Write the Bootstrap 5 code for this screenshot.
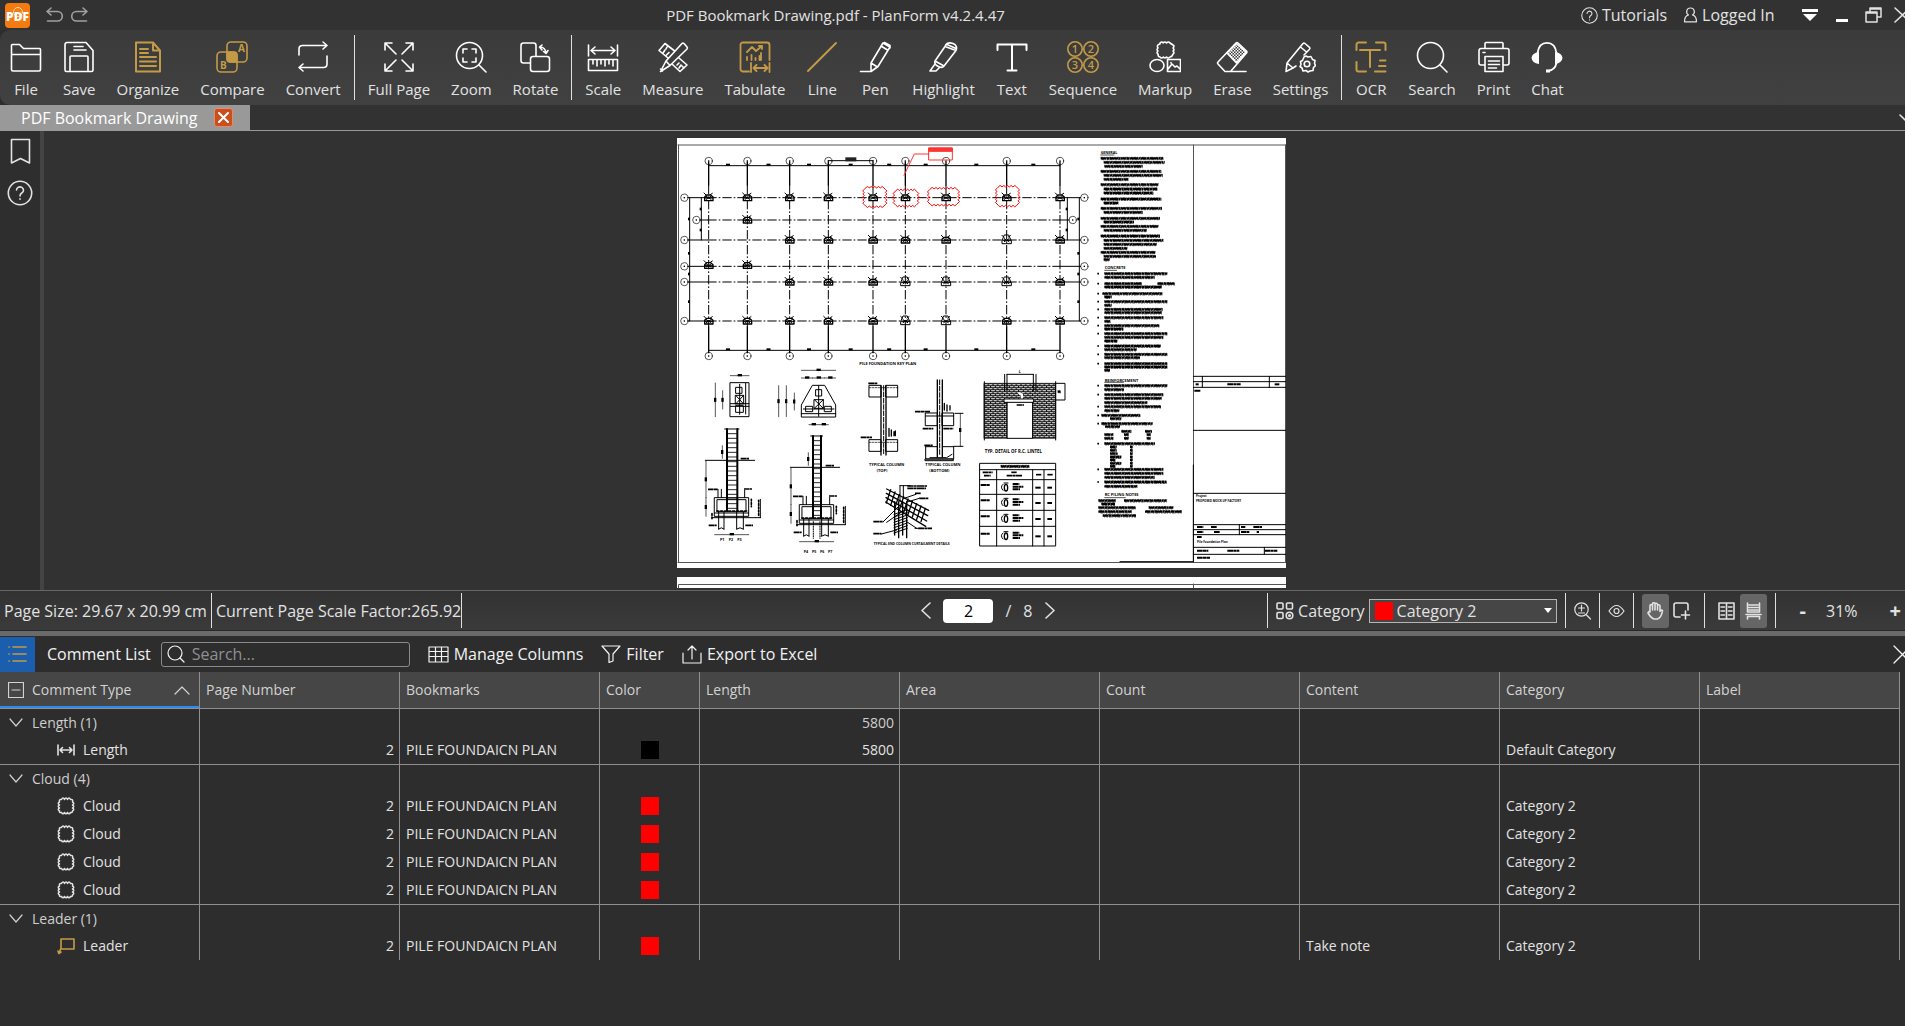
<!DOCTYPE html>
<html lang="en">
<head>
<meta charset="utf-8">
<meta name="viewport" content="width=device-width, initial-scale=1">
<title>PDF Bookmark Drawing.pdf - PlanForm</title>
<link rel="stylesheet" href="https://cdn.jsdelivr.net/npm/bootstrap@5.3.0/dist/css/bootstrap.min.css">
<style>
:root{--gold:#c39b46;--line:#8f8f8f}
body{font-family:"Open Sans","Noto Sans",sans-serif;font-size:15px;line-height:20px;background:#2d2d2d;color:#e2e2e2;height:100vh;overflow:hidden}
svg{display:block;flex:none;fill:none;stroke:currentColor;stroke-width:1.6;stroke-linecap:round;stroke-linejoin:round}
svg text{stroke:none;fill:currentColor;font-family:"Open Sans",sans-serif}
button,.plain{background:none;border:0;padding:0;color:inherit;text-decoration:none}
.gold{color:var(--gold)}
.titlebar{height:30px;background:#323232}
.titlebar .start{width:90px;padding-left:5px}
.titlebar .end{width:324px;overflow:hidden;font-size:16px}
.ribbon{height:75px;background:linear-gradient(#3b3b3b,#414141);border-radius:10px 0 0 10px;padding-left:10px}
.tools{gap:21px}
.tools button{min-width:30px;height:62px;padding-top:4px}
.tools svg{width:32px;height:32px;color:#fff}
.tools button.gold{color:inherit}
.tools .gold svg{color:var(--gold)}
.rule{width:1px;background:#e0e0e0;flex:none}
.ribbon .rule{height:65px;margin:0 13px}
.tabs{height:26px;background:#323232;border-bottom:1px solid #999}
.doctab{width:250px;background:#999;color:#fff;font-size:16px;padding-left:21px;gap:17px}
.closer{width:19px;height:19px;background:#c9501c;border:1px solid #e58a6c;border-radius:3px;color:#fff}
.work{background:#323232}
.rail{width:44px;background:#2e2e2e;border-right:4px solid #444;padding-top:6px;gap:15px}
.viewer{padding:7px 0 0 14px;overflow:hidden}
.sheet{width:609px;height:450px;color:#000;stroke-width:1;background:#323232}
.status{height:41px;font-size:16px;background:linear-gradient(#323232,#3b3b3b);border-top:1px solid #666;border-bottom:1px solid #282828;display:grid;grid-template-columns:1fr auto 1fr}
.status .rule{height:35px}
.pager{padding-left:71px;gap:12px}
.pager input{width:50px;height:24px;border:0;border-radius:4px;text-align:center;background:#fff;color:#000}
.catbox{width:188px;height:24px;border:1px solid #b5b5b5;background:#464646;padding-left:5px}
.catbox select{appearance:none;background:none;border:0;color:inherit;padding:0}
.chip{width:18px;height:18px;flex:none}
.red{background:#f00}.black{background:#000}
.toggle{width:27px;height:34px;border-radius:3px}
.toggle.on{background:#666}
.splitter{height:5px;background:#6a6a6a}
.listbar{height:36px;color:#f2f2f2;font-size:16px}
.listbtn{width:35px;height:35px;background:#1b5eae;color:var(--gold)}
.finder{width:249px;height:25px;border:1px solid #8a8a8a;border-radius:3px;padding-left:5px;gap:7px;margin-left:10px}
.finder input{background:none;border:0;color:inherit;outline:0;width:200px;padding:0}
.finder input::placeholder{color:#909090}
.listbar .act{gap:5px;margin-left:18px}
.grid{table-layout:fixed;width:1900px;border-collapse:separate;border-spacing:0;font-size:14px}
.grid th,.grid td{border-right:1px solid var(--line);padding:0 5px 0 6px;height:28px;white-space:nowrap}
.grid th{height:37px;background:#464646;border-bottom:1px solid var(--line);font-weight:400;color:#d2d2d2}
.grid th.sorted{box-shadow:inset 0 -2px #2a8cf0}
.grid th:first-child,.grid td:first-child{padding-left:8px}
.grid .group td{height:27px;color:#cfcfcf}
.grid tbody+tbody .group td{border-top:1px solid var(--line);height:28px}
.grid .leafcell{padding-left:49px}
.gridwrap{height:354px}
</style>
<script src="https://cdn.jsdelivr.net/npm/bootstrap@5.3.0/dist/js/bootstrap.bundle.min.js"></script>
</head>
<body class="d-flex flex-column">
<header class="titlebar d-flex align-items-center justify-content-between">
  <div class="start d-flex align-items-center">
    <svg width="25" height="25" viewBox="0 0 25 25"><rect width="25" height="25" rx="4" fill="#f47a12" stroke="none"/><circle cx="13" cy="9" r="4.5" stroke="#ffd9b0" stroke-width="1"/><text x="12.5" y="18" font-size="12" font-weight="800" text-anchor="middle" style="fill:#fff">PDF</text></svg>
    <button class="ms-3" aria-label="Undo"><svg width="17" height="16" viewBox="0 0 17 16" style="color:#a0a0a0"><path d="M5 1 1 4.500 5 8M1 4.500h10.500a4.700 4.700 0 0 1 0 9.500H1.500"/></svg></button>
    <button class="ms-2" aria-label="Redo"><svg width="17" height="16" viewBox="0 0 17 16" style="color:#a0a0a0"><path d="M12 1l4 3.500L12 8M16 4.500H5.500a4.700 4.700 0 0 0 0 9.500h10"/></svg></button>
  </div>
  <div>PDF Bookmark Drawing.pdf - PlanForm v4.2.4.47</div>
  <div class="end d-flex align-items-center">
    <a href="#" class="plain d-flex align-items-center flex-shrink-0"><svg class="me-1" width="17" height="17" viewBox="0 0 16 16"><circle cx="8" cy="8" r="7.300" stroke-width="1"/><path stroke-width="1" d="M5.700 6a2.300 2.200 0 1 1 3.500 2C8.300 8.500 8 8.800 8 10M8 12v.3"/></svg>Tutorials</a>
    <a href="#" class="plain d-flex align-items-center flex-shrink-0 ms-3"><svg class="me-1" width="15" height="16" viewBox="0 0 14 16"><path stroke-width="1.200" d="M7 1a3.700 3.700 0 0 1 2 6.900c2.500.7 4 3 4 6.900H1c0-3.900 1.500-6.200 4-6.900A3.700 3.700 0 0 1 7 1z"/></svg>Logged In</a>
    <button class="ms-4" aria-label="Ribbon options"><svg width="20" height="13" viewBox="0 0 20 13"><path d="M3 0h16v3H3zM4 5h14l-7 7z" fill="#fff" stroke="none"/></svg></button>
    <button class="ms-3" aria-label="Minimize"><svg width="14" height="16" viewBox="0 0 14 16"><path d="M1 12h12v3H1z" fill="#fff" stroke="none"/></svg></button>
    <button class="ms-3" aria-label="Restore"><svg width="18" height="16" viewBox="0 0 18 16"><path d="M1 5h11v10H1zM5 5V1h11v9h-4M1 6h11M5 2h11" stroke-width="1.500"/></svg></button>
    <button class="ms-2" aria-label="Close"><svg width="20" height="16" viewBox="0 0 20 16"><path d="M4 1l15 14M19 1 4 15"/></svg></button>
  </div>
</header>

<nav class="ribbon d-flex align-items-center" aria-label="Tools">
  <div class="tools d-flex">
    <button class="d-flex flex-column align-items-center justify-content-between"><svg viewBox="0 0 32 32"><path d="M1.500 28.500v-24a1 1 0 0 1 1-1h7l4 4h16a1 1 0 0 1 1 1v20a1.500 1.500 0 0 1-1.500 1.500H3a1.500 1.500 0 0 1-1.500-1.500zM2 13.500h28"/></svg>File</button>
    <button class="d-flex flex-column align-items-center justify-content-between"><svg viewBox="0 0 32 32"><path d="M4 1.500h19l7 8V29a1.500 1.500 0 0 1-1.500 1.500h-25A1.500 1.500 0 0 1 2 29V3.500a2 2 0 0 1 2-2zM7 30V16a1 1 0 0 1 1-1h16a1 1 0 0 1 1 1v14M11 5.500h9M11 9h12"/></svg>Save</button>
    <button class="gold d-flex flex-column align-items-center justify-content-between"><svg viewBox="0 0 32 32"><path d="M4 1.500h17l7 8v21H4zM21 1.500v8h7M8 8h8M8 12h8M8 16h16M8 20.500h16M8 25h16" stroke-width="2"/></svg>Organize</button>
    <button class="gold d-flex flex-column align-items-center justify-content-between"><svg viewBox="0 0 32 32"><rect x="11" y="1" width="20" height="20" rx="4"/><rect x="1" y="11" width="20" height="20" rx="4"/><rect x="11" y="11" width="10" height="10" rx="3" fill="currentColor"/><text x="22" y="11" font-size="10" font-weight="700">A</text><text x="4" y="28" font-size="10" font-weight="700">B</text></svg>Compare</button>
    <button class="d-flex flex-column align-items-center justify-content-between"><svg viewBox="0 0 32 32"><path d="M2 14V8q0-3.500 3.500-3.500H30M26 1l4 3.500L26 8M30 15v8q0 3.500-3.500 3.500H2M6 23l-4 3.500L6 30"/></svg>Convert</button>
  </div>
  <div class="rule"></div>
  <div class="tools d-flex">
    <button class="d-flex flex-column align-items-center justify-content-between"><svg viewBox="0 0 32 32"><path d="M2 9V2h7M2 2l11 11M23 2h7v7M30 2 19 13M2 23v7h7M2 30l11-11M30 23v7h-7M30 30 19 19"/></svg>Full Page</button>
    <button class="d-flex flex-column align-items-center justify-content-between"><svg viewBox="0 0 32 32"><circle cx="14.500" cy="14.500" r="13"/><path d="M24 24l7 7M8 12V8h4M17 8h4v4M21 17v4h-4M12 21H8v-4"/></svg>Zoom</button>
    <button class="d-flex flex-column align-items-center justify-content-between"><svg viewBox="0 0 32 32"><path d="M11 22H4.500A2.500 2.500 0 0 1 2 19.500v-15A2.500 2.500 0 0 1 4.500 2h10A2.500 2.500 0 0 1 17 4.500V15"/><rect x="11.500" y="15.500" width="19" height="15" rx="2.500"/><path d="M21 6q5 0 6 6M23 4l-2.500 2L23 9M24.500 10.500l2.500 2 2-3"/></svg>Rotate</button>
  </div>
  <div class="rule"></div>
  <div class="tools d-flex">
    <button class="d-flex flex-column align-items-center justify-content-between"><svg viewBox="0 0 32 32"><path d="M1.500 4v11M30.500 4v11M4 9.500h24M8 6 4 9.500 8 13M24 6l4 3.500-4 3.500M1.500 18.500h29v11h-29zM6 19v4M10 19v6M14 19v4M18 19v6M22 19v4M26 19v6"/></svg>Scale</button>
    <button class="d-flex flex-column align-items-center justify-content-between"><svg viewBox="0 0 32 32"><path d="M9 20 25 2.500a1.500 1.500 0 0 1 2 0L30 6a1.500 1.500 0 0 1 0 2L13 24.500 3.500 30.500zM9 20l4 4.500M3.500 28l2 2M11 17l-9-7.500L8 2.500l9 7M6 12l2-3M9 14.500l3-3M10 6l-1 2M22 17l8 7-7 6.500-7.500-7M22 27l2-3M20 24l2-2M27 27l-2-2"/></svg>Measure</button>
    <button class="gold d-flex flex-column align-items-center justify-content-between"><svg viewBox="0 0 32 32"><path d="M10 30.500H4A2.500 2.500 0 0 1 1.500 28V4A2.500 2.500 0 0 1 4 1.500h24A2.500 2.500 0 0 1 30.500 4v15M8 11l5-5 4 4 6-5M20 5h3v3M8 19v-3M12.500 19v-5M16.500 19v-2M20.500 19v-4M22 19v-7M12 22v9M30.500 22v9M14.500 27h14M17.500 24l-3 3 3 3M25.500 24l3 3-3 3" stroke-width="1.800"/></svg>Tabulate</button>
    <button class="gold d-flex flex-column align-items-center justify-content-between"><svg viewBox="0 0 32 32"><path d="M2 30 30 2" stroke-width="2"/></svg>Line</button>
    <button class="d-flex flex-column align-items-center justify-content-between"><svg viewBox="0 0 32 32"><path d="M1.500 30.500H12l7-5L31 6 24 2 12 22v8.500M12 22l6.500 4M22 5l6.500 4M23.500 2.500l2-1 5.500 3V7"/></svg>Pen</button>
    <button class="d-flex flex-column align-items-center justify-content-between"><svg viewBox="0 0 32 32"><path d="M17 5.500 7 20q-1 2.500 1.500 4.500l3 1.500q3 1 4.500-1L28 9.500 17 5.500zM17 5.500q2-5 8-3 5 2 3 7M7 20l9 5M7 23l-5 7h6l4-4M19 3.500l9 4"/></svg>Highlight</button>
    <button class="d-flex flex-column align-items-center justify-content-between"><svg viewBox="0 0 32 32"><path d="M1.500 9V3.500h29V9M16 3.500V29M11.500 29.500h9" stroke-width="2"/></svg>Text</button>
    <button class="gold d-flex flex-column align-items-center justify-content-between"><svg viewBox="0 0 32 32"><circle cx="8" cy="8" r="7.200"/><circle cx="24" cy="8" r="7.200"/><circle cx="8" cy="24" r="7.200"/><circle cx="24" cy="24" r="7.200"/><g font-size="11" font-weight="600" text-anchor="middle"><text x="8" y="12">1</text><text x="24" y="12">2</text><text x="8" y="28">3</text><text x="24" y="28">4</text></g></svg>Sequence</button>
    <button class="d-flex flex-column align-items-center justify-content-between"><svg viewBox="0 0 32 32"><path d="M11 2q2-2 3 0 2-2 3.500 0 2-2 3.500 0l3 2q2 1 0 3 2 2 0 3 2 2 0 3-1 3-3 3-2 2-3.500 0-2 2-3 0-2 2-3.500 0-2 0-2-3-2-1 0-3-2-1 0-3-2-3 2-4z"/><ellipse cx="8" cy="24.500" rx="7" ry="6"/><path d="M18.500 18.500h13v12h-13zM19 28l4-5 3 3 2-1 3 3M22 21.500v.5"/></svg>Markup</button>
    <button class="d-flex flex-column align-items-center justify-content-between"><svg viewBox="0 0 32 32"><defs><pattern id="chk" width="3" height="3" patternUnits="userSpaceOnUse"><path d="M0 0h1.500v1.500H0zM1.500 1.500H3V3H1.500z" fill="#fff" stroke="none"/></pattern></defs><path d="M30 30.500H9L2 23a1.500 1.500 0 0 1 0-2L20 2a1.500 1.500 0 0 1 2 0l8.500 8a1.500 1.500 0 0 1 0 2L15 30"/><path d="M11 12 20.500 2.500 30 11 20.500 22z" fill="url(#chk)"/></svg>Erase</button>
    <button class="d-flex flex-column align-items-center justify-content-between"><svg viewBox="0 0 32 32"><path d="m2 30.500 1-8.500L19 2.500a1.500 1.500 0 0 1 2 0l4.500 3.800a1.500 1.500 0 0 1 0 2L20 14M3 22l6 5-7 3.500M9 27l3-2M16.500 6l6 5"/><path d="m20 16 2-1 2 1 3-.5 1.500 3 2.500 1-.5 3 1 2-2 2-.5 3-3 .5-2 1-2-1.500-3 .5-1-3-2-1.500 1-2-.5-3 2-1z"/><circle cx="23" cy="23" r="2.800"/></svg>Settings</button>
  </div>
  <div class="rule"></div>
  <div class="tools d-flex">
    <button class="gold d-flex flex-column align-items-center justify-content-between"><svg viewBox="0 0 32 32"><path d="M1.500 9V3.500a2 2 0 0 1 2-2H11M21 1.500h7.500a2 2 0 0 1 2 2V9M11 30.500H3.500a2 2 0 0 1-2-2V21M5 9h20M15 9v17M25 19.500h5.500M24 25h6.500M20 30.500h10.500" stroke-width="2"/></svg>OCR</button>
    <button class="d-flex flex-column align-items-center justify-content-between"><svg viewBox="0 0 32 32"><circle cx="14.500" cy="14.500" r="13"/><path d="m24 24 7 7"/></svg>Search</button>
    <button class="d-flex flex-column align-items-center justify-content-between"><svg viewBox="0 0 32 32"><path d="M7 7.500V2.500a1 1 0 0 1 1-1h16a1 1 0 0 1 1 1v5M7 24H3a2 2 0 0 1-2-2V9.500a2 2 0 0 1 2-2h26a2 2 0 0 1 2 2V22a2 2 0 0 1-2 2h-4M7 15.500h18v15H7zM10.500 20h11M10.500 23.500h11M10.500 27h8M5 11.500h2"/></svg>Print</button>
    <button class="d-flex flex-column align-items-center justify-content-between"><svg viewBox="0 0 32 32"><path d="M6.500 12C7.500 5 11 1.800 16 1.800S24.500 5 25.500 12M25.500 22Q24 29 17 30" stroke-width="1.800"/><path d="M8 11v12q-7-1-7.500-6Q1 12 8 11zM24 11v12q7-1 7.500-6-.5-5-7.500-6zM15 28.500h4v3h-4z" fill="#fff" stroke="none"/></svg>Chat</button>
  </div>
</nav>

<div class="tabs d-flex align-items-stretch">
  <div class="doctab d-flex align-items-center">PDF Bookmark Drawing<button class="closer d-flex align-items-center justify-content-center" aria-label="Close tab"><svg width="11" height="11" viewBox="0 0 11 11"><path d="m1 1 9 9M10 1l-9 9" stroke-width="2"/></svg></button></div>
  <button class="ms-auto overflow-hidden" style="width:6px" aria-label="Tab list"><svg width="12" height="8" viewBox="0 0 12 8"><path d="m1 1 5 5 5-5"/></svg></button>
</div>

<main class="work d-flex flex-grow-1 overflow-hidden">
  <aside class="rail d-flex flex-column align-items-center flex-shrink-0">
    <button aria-label="Bookmarks"><svg width="21" height="28" viewBox="0 0 21 28"><path d="M1.500 2.500h18V26l-9-4.500-9 4.500z"/></svg></button>
    <button aria-label="Help"><svg width="26" height="26" viewBox="0 0 26 26"><circle cx="13" cy="13" r="11.700"/><path d="M9.500 10a3.500 3.300 0 1 1 5.300 3c-1.300.8-1.800 1.300-1.800 3M13 18.800v.4"/></svg></button>
  </aside>
  <section class="viewer d-flex justify-content-center flex-grow-1">
    <svg class="sheet" viewBox="677 138 609 450" role="img" aria-label="Pile foundation key plan">
      <defs>
        <pattern id="brick" width="14" height="12" patternUnits="userSpaceOnUse"><path d="M0 2h14M0 8h14M3 2v6M10 8v6M10 0v2" stroke="#000" stroke-width="3"/></pattern>
      </defs>
      <rect x="677" y="138" width="609" height="430" fill="#fff" stroke="none"/>
      <rect x="677" y="577" width="609" height="11" fill="#fff" stroke="none"/>
      <path d="M678.500 588V584.500H1286M1193.500 584v4M678.500 145v417M678 145h608M678 562.500h608M1285.500 145v417M1193.500 145v417" stroke="#555"/>
      <g id="plan" transform="translate(670 130) scale(.33333)" stroke-width="3"></g>
      <g id="notes" transform="translate(1060 130) scale(.33333)" stroke-width="3"></g>
      <g id="details" transform="translate(670 355) scale(.33333)" stroke-width="3"></g>
    </svg>
  </section>
</main>

<footer class="status align-items-center">
  <div class="d-flex align-items-center"><span class="ms-1 me-1">Page Size: 29.67 x 20.99 cm</span><div class="rule"></div><span class="ms-1">Current Page Scale Factor:265.92</span><div class="rule"></div></div>
  <div class="pager d-flex align-items-center">
    <button aria-label="Previous page"><svg width="10" height="17" viewBox="0 0 10 17"><path d="M9 1 1 8.500 9 16"/></svg></button>
    <input type="text" value="2" aria-label="Page"><span>/</span><span>8</span>
    <button aria-label="Next page"><svg width="10" height="17" viewBox="0 0 10 17"><path d="m1 1 8 7.500L1 16"/></svg></button>
  </div>
  <div class="d-flex align-items-center justify-content-end">
    <div class="rule me-2"></div>
    <svg width="18" height="18" viewBox="0 0 18 18"><rect x="1" y="1" width="6" height="6" rx="1"/><rect x="10.500" y="1" width="6" height="6" rx="1"/><rect x="1" y="10.500" width="6" height="6" rx="1"/><circle cx="13.500" cy="13.500" r="3.300"/><circle cx="13.500" cy="13.500" r=".7"/></svg>
    <label for="cat" class="mx-1">Category</label>
    <div class="catbox d-flex align-items-center"><span class="chip red me-1"></span><select id="cat" class="flex-grow-1"><option>Category 2</option><option>Default Category</option></select><svg class="me-1" width="8" height="6" viewBox="0 0 8 6"><path d="M0 0h8L4 5z" fill="#fff" stroke="none"/></svg></div>
    <div class="rule mx-2"></div>
    <button aria-label="Zoom level"><svg width="17" height="18" viewBox="0 0 17 18"><circle cx="7.500" cy="7.500" r="6.700" stroke-width="1.200"/><path d="m12.500 13 4 4M4.500 6h6M7.500 3v6M4.500 11h6" stroke-width="1.200"/></svg></button>
    <div class="rule mx-2"></div>
    <button aria-label="Show"><svg width="17" height="14" viewBox="0 0 17 14"><path d="M1 7q7.500-11 15 0-7.500 11-15 0z" stroke-width="1.200"/><circle cx="8.500" cy="7" r="2.500" stroke-width="1.200"/></svg></button>
    <div class="rule mx-2"></div>
    <button class="toggle on d-flex align-items-center justify-content-center" aria-label="Pan"><svg width="18" height="18" viewBox="0 0 18 18"><path d="M4 10V4q0-1.500 1-1.500T6.500 4v4-6q0-1.300 1.200-1.300T9 2v6-5.500q0-1.300 1.200-1.300T11.500 2.500V8 4q0-1.300 1.200-1.300T14 4v5.500q1-2 2.500-1-1 7-5 8.500H8q-3-1-6-6 .5-2 2-1"/></svg></button>
    <button class="toggle d-flex align-items-center justify-content-center" aria-label="Add region"><svg width="18" height="18" viewBox="0 0 18 18"><path d="M7 15H3a2 2 0 0 1-2-2V3a2 2 0 0 1 2-2h10a2 2 0 0 1 2 2v5M12.500 9v8M8.500 13h8"/></svg></button>
    <div class="rule mx-2"></div>
    <button class="toggle d-flex align-items-center justify-content-center" aria-label="Two pages"><svg width="17" height="18" viewBox="0 0 17 18"><path d="M1 1h7.500v16H1zM8.500 1H16v16H8.500zM3 5h3.500M3 9h3.500M3 13h3.500M10.500 5H14M10.500 9H14M10.500 13H14"/></svg></button>
    <button class="toggle on d-flex align-items-center justify-content-center" aria-label="Continuous"><svg width="17" height="18" viewBox="0 0 17 18"><path d="M2.500 1v9h12V1M4 3h9M4 5.500h9M4 8h9M1 12.500h15M2.500 17v-2.500h12V17"/></svg></button>
    <div class="rule ms-2 me-1"></div>
    <button class="ms-3 px-1 fw-bold fs-5" aria-label="Zoom out">-</button><span class="mx-3">31%</span><button class="ms-3 me-1 fw-bold fs-5" aria-label="Zoom in">+</button>
  </div>
</footer>
<div class="splitter"></div>

<div class="listbar d-flex align-items-center flex-shrink-0 overflow-hidden">
  <button class="listbtn d-flex align-items-center justify-content-center" aria-label="Comment list"><svg width="19" height="18" viewBox="0 0 19 18"><path d="M5 2h13M5 9h13M5 16h13M1 2h.2M1 9h.2M1 16h.2"/></svg></button>
  <label for="find" class="ms-2 ps-1">Comment List</label>
  <div class="finder d-flex align-items-center"><svg width="18" height="18" viewBox="0 0 18 18"><circle cx="8" cy="8" r="7" stroke-width="1.200"/><path d="m13 13 4 4" stroke-width="1.200"/></svg><input id="find" type="text" placeholder="Search..."></div>
  <button class="act d-flex align-items-center"><svg width="21" height="17" viewBox="0 0 21 17"><path d="M1 1h19v15H1zM1 5.500h19M7.500 1v15M13.500 1v15M1 10.500h19" stroke-width="1.200"/></svg>Manage Columns</button>
  <button class="act d-flex align-items-center"><svg width="20" height="18" viewBox="0 0 20 18"><path d="M1 1h18l-7 8v7l-4 1.500V9z" stroke-width="1.200"/></svg>Filter</button>
  <button class="act d-flex align-items-center"><svg width="20" height="19" viewBox="0 0 20 19"><path d="M1 8v10h18V8M10 14V1M6 5l4-4 4 4" stroke-width="1.200"/></svg>Export to Excel</button>
  <button class="ms-auto overflow-hidden" style="width:12px" aria-label="Close list"><svg width="19" height="19" viewBox="0 0 19 19"><path d="m1 1 17 17M18 1 1 18" stroke-width="1.300"/></svg></button>
</div>

<div class="gridwrap overflow-hidden flex-shrink-0">
<table class="grid">
  <colgroup><col style="width:200px"><col style="width:200px"><col style="width:200px"><col style="width:100px"><col span="6" style="width:200px"></colgroup>
  <thead><tr>
    <th class="sorted"><div class="d-flex align-items-center"><svg class="me-2" width="16" height="16" viewBox="0 0 16 16"><path d="M.5.500h15v15H.5zM4 8h8" stroke-width="1.200"/></svg>Comment Type<svg class="ms-auto me-1" width="16" height="9" viewBox="0 0 16 9"><path d="m1 8 7-7 7 7" stroke-width="1.200"/></svg></div></th>
    <th>Page Number</th><th>Bookmarks</th><th>Color</th><th>Length</th><th>Area</th><th>Count</th><th>Content</th><th>Category</th><th>Label</th>
  </tr></thead>
</table>
</div>

<template id="i-Length"><svg width="18" height="12" viewBox="0 0 18 12"><path d="M1 1v10M17 1v10M3 6h12M5.500 3.500 3 6l2.500 2.500M12.500 3.500 15 6l-2.500 2.500"/></svg></template>
<template id="i-Cloud"><svg width="18" height="18" viewBox="0 0 18 18"><path stroke-width="1.500" d="M4.500 2.500q1.500-3 3 0 1.500-3 3 0 1.500-3 3 0 3-.5 2 2.500 2.500 1.500 0 3 2.500 1.500 0 3 2.500 1.500 0 3-.2 2-2 1.500-1.500 2.500-3 0-1.500 2.500-3 0-1.500 2.500-3 0-2.500.5-2-1.500-2.500-1.500 0-3-2.500-1.500 0-3-2.500-1.500 0-3-.8-3 2-2.500z"/></svg></template>
<template id="i-Leader"><svg width="18" height="18" viewBox="0 0 18 18" class="gold"><path d="M4 2h13v10H4zM4 11l-2 5M1 14l.8 2.500L4 15"/></svg></template>

<script>
// Comment rows, grouped by type.
const groups = [
  {type:'Length', total:'5800', rows:[{color:'black', length:'5800', content:'', category:'Default Category'}]},
  {type:'Cloud', total:'', rows:Array(4).fill({color:'red', length:'', content:'', category:'Category 2'})},
  {type:'Leader', total:'', rows:[{color:'red', length:'', content:'Take note', category:'Category 2'}]}
];
const grid = document.querySelector('.grid');
for (const g of groups) {
  const icon = document.getElementById('i-' + g.type).innerHTML;
  let h = `<tr class="group"><td><div class="d-flex align-items-center"><svg class="me-2" width="16" height="9" viewBox="0 0 16 9"><path d="m2 1 6 7 6-7" stroke-width="1.200"/></svg>${g.type} (${g.rows.length})</div></td><td></td><td></td><td></td><td class="text-end">${g.total}</td>${'<td></td>'.repeat(5)}</tr>`;
  for (const r of g.rows) h += `<tr><td><div class="leafcell d-flex align-items-center gap-2">${icon}${g.type}</div></td><td class="text-end">2</td><td>PILE FOUNDAICN PLAN</td><td><span class="chip ${r.color} d-block mx-auto"></span></td><td class="text-end">${r.length}</td><td></td><td></td><td>${r.content}</td><td>${r.category}</td><td></td></tr>`;
  grid.insertAdjacentHTML('beforeend', `<tbody>${h}</tbody>`);
}

// Drawing helpers.
const put = (id, s) => document.getElementById(id).innerHTML = s;
const ln = (d, extra='') => `<path d="${d}" ${extra}/>`;
const box = (x,y,w,h,extra='') => `<rect x="${x}" y="${y}" width="${w}" height="${h}" ${extra}/>`;
const txt = (x,y,size,t,extra='') => `<text x="${x}" y="${y}" font-size="${size}" font-weight="700" ${extra}>${t}</text>`;
const scribble = (x0,y,x1,w=7) => ln(`M${x0} ${y}H${x1}`, `stroke-width="${w}" stroke-linecap="butt" stroke-dasharray="17 1 9 1 24 1 6 1"`) + (w>6 ? ln(`M${x0} ${y-3}H${x1}M${x0+3} ${y+4}H${x1}`, `stroke-width="2" stroke-linecap="butt" stroke-dasharray="5 3 8 2 3 4" stroke-dashoffset="${y%19}"`) : '');
const dim = (x0,y0,x1,y1) => { const v = x0===x1, mx=(x0+x1)/2, my=(y0+y1)/2;
  return ln(`M${x0} ${y0}L${x1} ${y1}`,'stroke-width="2"') + (v ? box(mx-4,my-6,7,12,'fill="#000" stroke="none"') : box(mx-6,my-5,13,7,'fill="#000" stroke="none"')); };

// Key plan: grid axes, bubbles, pile caps, clouds and the leader.
const X=[116,232,359,475,609,706,828,1010,1170], Y=[203,270,330,409,456,573];
let p='';
const bubble=(x,y)=>`<circle cx="${x}" cy="${y}" r="11" stroke-width="2"/>`+box(x-2,y-2,4,4,'fill="#000" stroke="none"');
for (const x of X) p += bubble(x,93)+bubble(x,678)+ln(`M${x} 96V165M${x} 590V668`,'stroke-width="4"')+ln(`M${x} 165V590`,'stroke-linecap="butt" stroke-dasharray="28 6 5 6"');
Y.forEach((y,i)=>{ const a=i===1?79:43,b=i===1?1208:1243;
  p += bubble(a,y)+bubble(b,y)+ln(`M${a+11} ${y}H112M1170 ${y}H${b-11}`)+ln(`M112 ${y}H1170`,'stroke-linecap="butt" stroke-dasharray="28 6 5 6"'); });
p += ln('M116 107H1170M116 661H1170M59 203V573M1228 203V573M94 203V330M1192 203V330');
for (let i=0;i<8;i++){ const m=(X[i]+X[i+1])/2; for (const y of [104,658]) p+=box(m-6,y-3,12,6,'fill="#000" stroke="none"'); }
for (const y of [267,370,432,515]) p+=box(54,y-4,6,8,'fill="#000" stroke="none"')+box(1222,y-4,6,8,'fill="#000" stroke="none"');
for (const y of [237,300]) p+=box(89,y-4,6,8,'fill="#000" stroke="none"')+box(1187,y-4,6,8,'fill="#000" stroke="none"');
const cap=(x,y,tri)=> (tri? ln(`M${x-6} ${y-13}h12L${x+14} ${y+5}v8h-28v-8z`,'stroke-width="3"') : ln(`M${x-12} ${y+11}v-11l6-6h12l7 6v11z`,'stroke-width="4"'))
  + ln(`M${x-14} ${y-12}l6 6M${x-12} ${y+3}h24M${x-7} ${y-2}l14 9M${x+7} ${y-2}l-14 9M${x+11} ${y-11}l-6 4`,'stroke-width="3"');
const rows=[[203,[0,1,2,3,4,5,6,7,8]],[270,[1]],[330,[2,3,4,5,6,7,8]],[406,[0,1]],[456,[2,3,4,5,6,7,8]],[573,[0,1,2,3,4,5,6,7,8]]];
for (const [y,c] of rows) for (const i of c) p+=cap(X[i],y-2,(y===330&&i===7)||(y===456&&i>4&&i<8)||(y===573&&(i===5||i===6)));
p += ln('M475 92H609')+box(526,82,33,12,'fill="#222" stroke="none"');
const cloud=(x0,y0,x1,y1)=>{ let d=`M${x0+4} ${y0}`; const s=(x,y,ex,ey,ox,oy,n)=>{for(let k=1;k<=n;k++){const t=k/n,u=(k-.5)/n;d+=`Q${x+(ex-x)*u+ox} ${y+(ey-y)*u+oy} ${x+(ex-x)*t} ${y+(ey-y)*t}`}};
  const nx=Math.round((x1-x0)/12), ny=Math.round((y1-y0)/12);
  s(x0+4,y0,x1-4,y0,0,-9,nx); d+=`L${x1} ${y0+4}`; s(x1,y0+4,x1,y1-4,9,0,ny); d+=`L${x1-4} ${y1}`; s(x1-4,y1,x0+4,y1,0,9,nx); d+=`L${x0} ${y1-4}`; s(x0,y1-4,x0,y0+4,-9,0,ny); return ln(d+'Z','stroke="#f00" stroke-width="3"'); };
p += cloud(583,174,646,228)+cloud(674,182,742,226)+cloud(777,177,864,223)+cloud(981,171,1044,226);
p += ln('M702 136 733 72H777','stroke="#f33"')+box(777,54,70,36,'stroke="#f33"')+box(777,54,70,10,'fill="#f33" stroke="#f33"');
p += txt(568,704,12,'PILE FOUNDATION KEY PLAN');
put('plan',p);

// Notes column: [y, start, end] for every line of fine print.
const N=[[85,122,310],[97,131,314],[109,133,248],[124,122,304],[136,131,308],[148,131,205],[164,122,296],[177,131,292],[189,131,280],[207,122,304],[219,131,175],[235,122,306],[247,131,248],[265,122,300],[276,131,222],[289,122,296],[301,131,260],[318,122,300],[331,131,310],[343,131,290],[355,131,202],[367,122,286],[379,131,288],[389,131,150],
[431,133,322],[442,133,284],[461,133,245],[461,292,345],[471,133,305],[491,127,308],[501,133,155],[515,133,322],[526,133,155],[538,133,308],[548,133,306],[563,133,310],[574,133,152],[587,133,298],[597,133,190],[611,133,322],[622,133,310],[633,133,172],[648,133,302],[659,133,230],[673,133,322],[683,133,240],[701,133,322],[711,133,322],[721,133,150],
[767,133,322],[779,133,192],[794,133,310],[805,133,305],[818,133,262],[830,133,303],[842,133,178],[856,124,241],[866,150,184],[881,124,278],[890,135,180],[904,184,214],[904,255,276],[914,133,160],[914,192,206],[914,260,272],[925,133,160],[925,192,206],[925,260,272],[941,133,285],
[951,150,170],[961,150,170],[971,150,173],[981,150,184],[990,150,166],[1000,150,184],[1009,150,166],[1018,133,310],[1030,133,310],[1042,133,284],[1056,133,320],[1069,133,232],[1112,115,168],[1112,192,320],[1122,124,165],[1133,115,228],[1133,266,340],[1145,115,215],[1145,255,365],[1157,128,228],
[763,407,416],[763,502,542],[763,644,658],[782,403,422],[1191,411,430],[1191,453,470],[1191,543,556],[1191,580,606],[1206,411,430],[1206,462,480],[1206,543,568],[1206,590,597],[1221,411,425],[1262,411,445],[1262,502,538],[1262,614,652],[1283,411,450]];
let n=N.map(([y,a,b])=>scribble(a,y,b,a>400?6:7)).join('');
for (const y of [951,961,971,981,990,1000,1009]) n+=scribble(210,y,218);
for (const y of [431,461,491,515,538,563,587,611,648,673,701,767,794,830,856,881,941,1018,1056]) n+=scribble(112,y,117,5);
n+=txt(122,72,11,'GENERAL')+txt(134,418,12,'CONCRETE')+txt(134,755,12,'REINFORCEMENT')+txt(134,1099,12,'RC PILING NOTES')+ln('M122 75H162M134 421H170M134 757H190M134 1103H196','stroke-width="2"');
n+=txt(408,1101,9,'Project')+txt(408,1115,9,'PROPOSED MOCK UP FACTORY')+txt(411,1238,9,'Pile Foundation Plan');
n+=ln('M400 739H677M400 755H677M400 772H677M400 901H677M400 1090H677M400 1184H677M400 1199H677M400 1214H677M400 1252H677M400 1273H677M427 739V772M628 739V772M538 1184V1214M613 1252V1273M400 1005V1295M180 1295H400');
put('notes',n);

// Details in the lower left: caps, columns, lintel, reinforcement and schedule.
let d='';
d+=box(181,83,56,102)+box(198,97,18,18)+box(197,121,24,26)+ln('M197 121l24 26M221 121l-24 26M181 154H237M181 146h56M227 85v92M209 88v90')+box(198,152,22,20)+dim(181,62,237,62)+dim(136,84,136,185)+dim(158,107,158,162);
d+=ln('M394 185V150L427 91H464L497 150V185zM394 176H497M446 92v92M400 162h92')+box(438,104,17,19)+box(433,134,27,26)+ln('M433 134l27 26M460 134l-27 26')+box(408,154,20,16)+box(464,154,20,16)+dim(394,46,497,46)+dim(394,69,428,69)+dim(428,69,464,69)+dim(464,69,497,69)+dim(326,92,326,185)+dim(349,92,349,185)+dim(373,114,373,165)+dim(417,209,445,209)+dim(447,209,475,209);
const pile=(x,top,w,baseY,left)=>{ let s=ln(`M${x} ${top}V${baseY+40}M${x+w} ${top}V${baseY+40}`,'stroke-width="6"'); for(let y=top+14;y<baseY+38;y+=14) s+=ln(`M${x} ${y}h${w}`,'stroke-width="2.500"');
  s+=ln(`M${x-7} ${top}h${w+12}`)+box(left,baseY,102,56)+box(left+8,baseY+6,86,36)+ln(`M${left} ${baseY+46}h102M${left-8} ${baseY+60}h145M${left+137} ${baseY+5}v55`)+dim(left,baseY+111,left+102,baseY+111)+ln(`M${left-28} ${baseY-112}H${left+120}`)+dim(left-26,baseY-110,left-26,baseY)+dim(left-26,baseY,left-26,baseY+56);
  for (const o of [12,28,66,86]) s+=ln(`M${left+o} ${baseY+44}v50`);
  s+=ln(`M${left+12} ${baseY+94}q8-8 16 0M${left+66} ${baseY+94}q10-8 20 0M${left+10} ${baseY}v-25M${left+20} ${baseY}v-25M${left+90} ${baseY}v-22`)+scribble(left-20,baseY-25,left+10,5)+scribble(left+88,baseY-26,left+112,5)+scribble(left-18,baseY+83,left+6,5)+scribble(left+92,baseY+83,left+115,5)+scribble(left+78,baseY-117,left+103,5)+dim(x-14,top+50,x-14,top+88);
  s+=ln(`M${left+6} ${baseY+40}h90`,'stroke-width="5" stroke-dasharray="6 6"')+ln(`M${left+132} ${baseY+8}v48M${left+110} ${baseY+5}v22M${left-8} ${baseY+48}v20`,'stroke-width="5" stroke-dasharray="5 5"'); return s; };
d+=pile(171,222,31,428,134)+pile(429,243,24,449,389)+ln('M430 500v50M450 500v50','stroke-dasharray="3 4"');
for (const [x,y,t] of [[150,559,'P1'],[176,559,'P2'],[202,559,'P3'],[401,594,'P4'],[426,594,'P5'],[450,594,'P6'],[474,594,'P7']]) d+=txt(x,y,11,t);
d+=ln('M633 92V300M648 92V300','stroke-width="4"')+ln('M641 92V300','stroke-dasharray="14 5"')+box(598,91,35,35)+box(648,91,35,35)+box(598,254,35,35)+box(648,254,35,35)+ln('M598 98h85M598 262h85','stroke-dasharray="5 4" stroke-width="2"')+scribble(595,85,622,5)+scribble(572,247,606,5)+ln('M657 220v24M664 225v18M672 230v12M676 228v14','stroke-width="4"');
d+=ln('M802 75V306M817 75V306','stroke-width="4"')+ln('M809 75V300','stroke-dasharray="14 5"')+box(767,174,35,38)+box(817,174,34,38)+ln('M767 275V312H851V275M767 275h35M817 275h34M767 183h84M780 308h50l16-10')+ln('M855 175h24M851 274h28')+dim(871,176,871,274)+scribble(735,170,780,5)+scribble(763,271,788,5)+scribble(758,221,790,5)+scribble(820,221,850,5)+ln('M823 145v20M831 150v18M840 152v13','stroke-width="4"')+box(766,312,84,5);
d+=txt(597,333,12,'TYPICAL COLUMN')+txt(620,350,12,'(TOP)')+txt(766,333,12,'TYPICAL COLUMN')+txt(778,350,12,'(BOTTOM)');
d+=`<path d="M943 85H1157V250H1088V140H1011V250H943z" fill="url(#brick)" stroke-width="2"/>`+ln('M1048 115l8 4v10','stroke="#fff" stroke-width="7"')+box(1003,132,88,10,'fill="#fff"')+ln('M1011 142V250H1088V142M1004 58V108M1011 58V108M1090 58V108M1098 58V108M1011 58h79M1157 85h28v50h-28M943 80v175M1157 80v175')+scribble(1040,150,1062,5)+scribble(1163,110,1172)+txt(1046,54,11,'L')+txt(944,294,13,'TYP. DETAIL OF R.C. LINTEL');
// Crossing reinforcement cage.
for (let i=0;i<4;i++) d+=ln(`M${650-i} ${402+i*13}L${776-i*3} ${466+i*16}`,'stroke-width="4"')+ln(`M${674+i*12} 440V${540+i%2*8}`,'stroke-width="4"');
for (let i=0;i<9;i++) d+=ln(`M${662+i*13} ${404+i*7}l-13 40`,'stroke-width="4"')+ (i<8?ln(`M672 ${478+i*8}l40-14`,'stroke-width="3"'):'');
d+=ln('M690 392V440M700 392V430M702 430 738 418M715 440 748 430M640 500 690 450M650 502 696 470M634 537 680 525M735 520h20M710 500l30 20M690 392h30')+scribble(712,393,772,5)+scribble(712,400,768,5)+scribble(735,415,752,5)+scribble(748,430,775,5)+scribble(610,500,640,5)+scribble(610,536,634,5)+scribble(745,520,786,5)+txt(611,571,10,'TYPICAL END COLUMN CURTAILMENT DETAILS');
d+=box(930,325,227,248)+ln('M930 344H1157M930 374H1157M930 418H1157M930 466H1157M930 514H1157M980 344V573M1088 344V573M1122 344V573')+scribble(992,334,1078)+scribble(938,352,968,5)+scribble(942,362,962,5)+scribble(1024,352,1040,5)+scribble(1010,362,1056,5)+scribble(1098,359,1114,5)+scribble(1132,359,1148,5);
for (const y of [396,442,490,542]) d+=scribble(932,y-6,960,6)+`<ellipse cx="1008" cy="${y+2}" rx="5" ry="10" stroke-width="4"/>`+ln(`M999 ${y-8}q-10 8 0 18M1002 ${y-12}h12`)+scribble(1028,y-9,1048,6)+scribble(1028,y-1,1060,6)+scribble(1028,y+7,1050,6)+scribble(1096,y+2,1112,6)+scribble(1132,y+2,1146,6);
put('details',d);
</script>
</body>
</html>
